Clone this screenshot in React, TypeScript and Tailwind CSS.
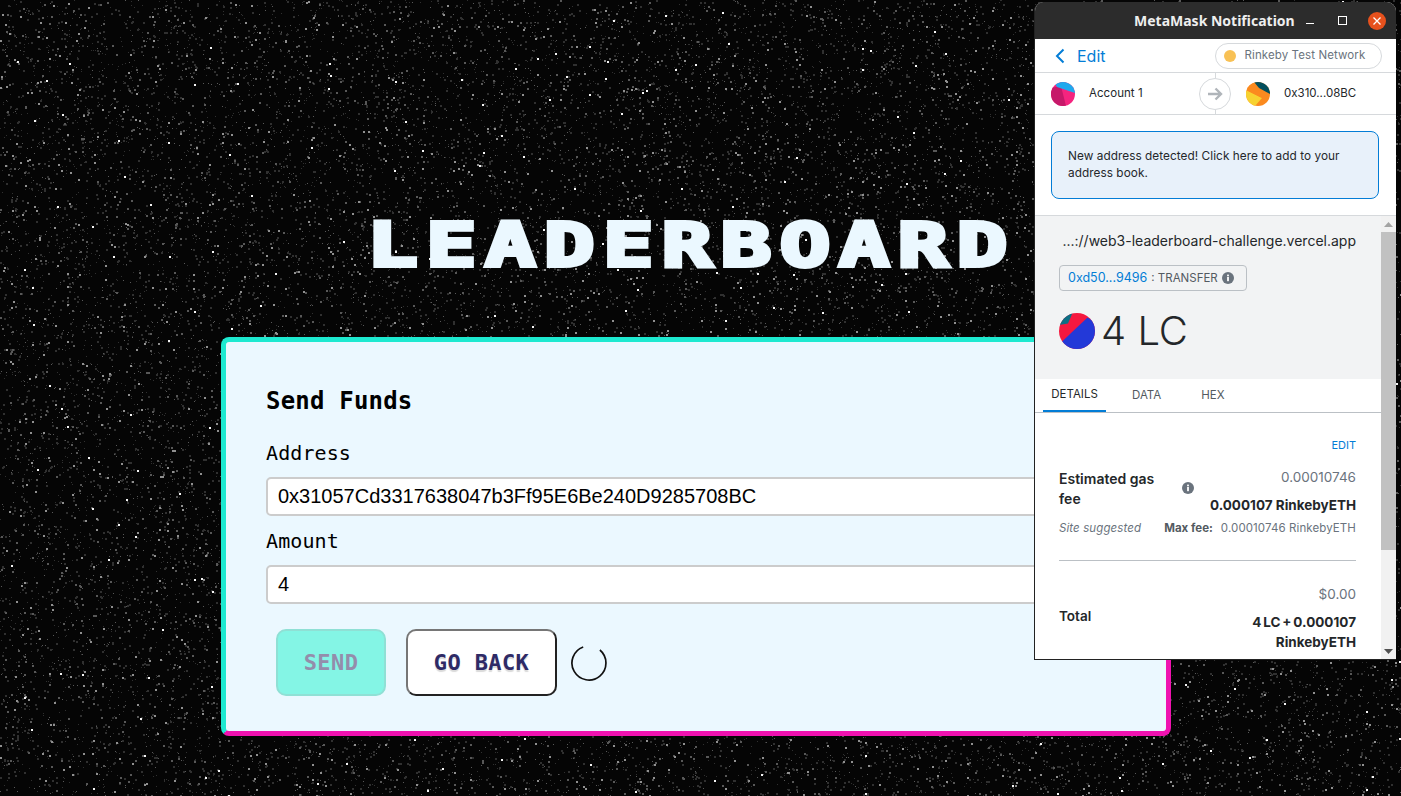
import React, { useMemo } from "react";

function Stars() {
  const paths = useMemo(() => {
    let s = 12345;
    const r = () => {
      s = (s * 1664525 + 1013904223) >>> 0;
      return s / 4294967296;
    };
    const buckets: string[][] = [[], [], [], []];
    for (let i = 0; i < 34000; i++) {
      const x = Math.floor(r() * 1401);
      const y = Math.floor(r() * 796);
      const k = r();
      const b = k < 0.68 ? 0 : k < 0.93 ? 1 : k < 0.99 ? 2 : 3;
      const sz = b >= 2 ? 2 : r() < 0.4 ? 2 : 1;
      buckets[b].push(`M${x} ${y}h${sz}v${sz}h-${sz}z`);
    }
    return buckets.map((b) => b.join(""));
  }, []);
  return (
    <svg className="absolute inset-0 blur-[0.5px]" width="1401" height="796" viewBox="0 0 1401 796" shapeRendering="crispEdges">
      <rect width="1401" height="796" fill="#050505" />
      <path d={paths[0]} fill="#303030" />
      <path d={paths[1]} fill="#585858" />
      <path d={paths[2]} fill="#909090" />
      <path d={paths[3]} fill="#f4f4f4" />
    </svg>
  );
}

function Info({ size = 12 }: { size?: number }) {
  return (
    <svg width={size} height={size} viewBox="0 0 12 12" className="shrink-0">
      <circle cx="6" cy="6" r="6" fill="#6a737d" />
      <rect x="5.1" y="5" width="1.8" height="4.2" fill="#fff" />
      <rect x="5.1" y="2.6" width="1.8" height="1.7" fill="#fff" />
    </svg>
  );
}

function Ident({ size, kind }: { size: number; kind: 0 | 1 | 2 }) {
  return (
    <svg width={size} height={size} viewBox="0 0 24 24" className="shrink-0">
      <defs>
        <clipPath id={`c${kind}`}>
          <circle cx="12" cy="12" r="12" />
        </clipPath>
      </defs>
      <g clipPath={`url(#c${kind})`}>
        {kind === 0 && (
          <>
            <rect width="24" height="24" fill="#f5247f" />
            <path d="M0 6L10 4L15 24H0Z" fill="#c6196a" />
            <path d="M3 0H24V11L6 5Z" fill="#1fa9ee" />
          </>
        )}
        {kind === 1 && (
          <>
            <rect width="24" height="24" fill="#fb8a1f" />
            <path d="M0 8L16 16L9 24H0Z" fill="#f7d231" />
            <path d="M0 0H8L16 16L0 8Z" fill="#fb8a1f" />
            <path d="M8 0H24V12L13 6Z" fill="#034f5d" />
          </>
        )}
        {kind === 2 && (
          <>
            <rect width="24" height="24" fill="#f5183f" />
            <path d="M1 20L19 3L24 6V24H6Z" fill="#2339d8" />
            <path d="M0 8L5 0H9L6 7Z" fill="#0b6f85" />
          </>
        )}
      </g>
    </svg>
  );
}

function MetaMask() {
  return (
    <div className="absolute left-[1034px] top-[2px] w-[362px] h-[658px] flex flex-col overflow-hidden rounded-t-[9px] border-l border-b border-[#222] bg-white text-[#24272a] font-['Inter','Noto_Sans',sans-serif]">
      <div className="h-[37px] shrink-0 bg-[#2c2c2c] flex items-center text-white">
        <span className="ml-[99px] w-[161px] text-[14px] font-bold whitespace-nowrap font-['Noto_Sans',sans-serif] text-[#eee]">MetaMask Notification</span>
        <span className="ml-[11px] w-[8px] h-[1px] bg-white mt-[5px]" />
        <span className="ml-[24px] w-[9px] h-[9px] border border-white" />
        <span className="ml-[21px] w-[18px] h-[18px] rounded-full bg-[#e6511d] flex items-center justify-center">
          <svg width="10" height="10" viewBox="0 0 10 10">
            <path d="M1.5 1.5L8.5 8.5M8.5 1.5L1.5 8.5" stroke="#fff" strokeWidth="1.3" />
          </svg>
        </span>
      </div>

      <div className="h-[34px] shrink-0 border-b border-[#d6d9dc] flex items-center">
        <svg width="10" height="16" viewBox="0 0 10 16" className="ml-[20px]">
          <path d="M8.5 1.5L2 8L8.5 14.5" fill="none" stroke="#037dd6" strokeWidth="2" />
        </svg>
        <span className="ml-[12px] text-[16px] text-[#037dd6]">Edit</span>
        <div className="ml-[109px] w-[167px] h-[26px] rounded-full border border-[#d6d9dc] flex items-center">
          <span className="ml-[8px] w-[12px] h-[12px] rounded-full bg-[#f8c155]" />
          <span className="ml-[9px] text-[11.5px] tracking-[0.1px] text-[#6a737d] whitespace-nowrap">Rinkeby Test Network</span>
        </div>
      </div>

      <div className="h-[42px] shrink-0 border-b border-[#d6d9dc] flex items-center relative">
        <div className="ml-[16px]"><Ident size={24} kind={0} /></div>
        <span className="ml-[14px] w-[110px] text-[11.5px] tracking-[0.05px]">Account 1</span>
        <div className="relative w-[32px] h-[32px] rounded-full border border-[#d6d9dc] bg-white flex items-center justify-center">
          <span className="absolute left-[15px] top-[-6px] h-[5px] w-px bg-[#d6d9dc]" />
          <span className="absolute left-[15px] bottom-[-6px] h-[5px] w-px bg-[#d6d9dc]" />
          <svg width="16" height="14" viewBox="0 0 16 14">
            <path d="M1 7H14M8.5 1.5L14 7L8.5 12.5" fill="none" stroke="#b0b5ba" strokeWidth="2.4" />
          </svg>
        </div>
        <div className="ml-[15px]"><Ident size={24} kind={1} /></div>
        <span className="ml-[14px] text-[11.5px] whitespace-nowrap">0x310...08BC</span>
      </div>

      <div className="h-[101px] shrink-0 border-b border-[#d6d9dc] pt-[16px] pl-[16px]">
        <div className="w-[328px] h-[68px] rounded-[8px] border border-[#037dd6] bg-[#e8f1fa] px-[16px] pt-[16px] text-[11.8px] tracking-[0.05px] leading-[17px]">
          New address detected! Click here to add to your address book.
        </div>
      </div>

      <div className="flex-1 min-h-0 flex">
        <div className="w-[346px] shrink-0 overflow-hidden flex flex-col">
          <div className="h-[163px] shrink-0 bg-[#f2f3f4] pl-[24px] pr-[25px]">
            <div className="mt-[15px] text-[14px] leading-[20px] text-right whitespace-nowrap">...://web3-leaderboard-challenge.vercel.app</div>
            <div className="mt-[14px] w-[188px] h-[26px] rounded-[4px] border border-[#bbc0c5] flex items-center pl-[8px]">
              <span className="text-[12.5px] text-[#037dd6] whitespace-nowrap">0xd50...9496</span>
              <span className="ml-[4px] text-[11.5px] leading-[14px] mb-[1px] text-[#535a61] whitespace-nowrap">: TRANSFER</span>
              <span className="ml-[4px]"><Info /></span>
            </div>
            <div className="mt-[22px] flex items-center">
              <Ident size={36} kind={2} />
              <span className="ml-[6px] text-[40px] leading-[36px] font-light whitespace-nowrap">4 LC</span>
            </div>
          </div>

          <div className="h-[34px] shrink-0 border-b border-[#bbc0c5] flex text-[11.5px] text-[#535a61]">
            <div className="ml-[8px] w-[63px] h-[33px] pt-[1px] border-b-2 border-[#037dd6] flex items-center justify-center text-[#24272a]">DETAILS</div>
            <div className="ml-[26px] h-[33px] pt-[1px] flex items-center">DATA</div>
            <div className="ml-[40px] h-[33px] pt-[1px] flex items-center">HEX</div>
          </div>

          <div className="pl-[24px] pr-[25px]">
            <div className="mt-[24px] text-[11px] leading-[16px] text-right text-[#037dd6]">EDIT</div>
            <div className="mt-[14px] flex">
              <div className="w-[100px] mt-[2px] text-[14px] leading-[20px] font-semibold">Estimated gas fee</div>
              <div className="ml-[23px] mt-[15px]"><Info /></div>
              <div className="flex-1 text-right">
                <div className="text-[13.5px] leading-[20px] text-[#6a737d]">0.00010746</div>
                <div className="mt-[8px] text-[13.5px] leading-[20px] font-bold whitespace-nowrap">0.000107 RinkebyETH</div>
              </div>
            </div>
            <div className="mt-[5px] flex items-center justify-between text-[11.5px] leading-[16px] text-[#6a737d]">
              <span className="italic tracking-[0.1px]">Site suggested</span>
              <span className="whitespace-nowrap"><b className="text-[#535a61] font-bold">Max fee:</b><span className="ml-[8px] tracking-[0.1px]">0.00010746 RinkebyETH</span></span>
            </div>
            <div className="mt-[24px] h-px bg-[#bbc0c5]" />
            <div className="mt-[23px] text-right text-[13.5px] leading-[20px] text-[#6a737d]">$0.00</div>
            <div className="flex justify-between">
              <span className="text-[13.5px] leading-[20px] font-semibold mt-[2px]">Total</span>
              <span className="mt-[8px] w-[130px] text-right text-[13.5px] leading-[20px] font-bold [word-spacing:-1.3px]">4 LC + 0.000107 RinkebyETH</span>
            </div>
          </div>
        </div>

        <div className="w-[15px] shrink-0 bg-[#f1f1f1] flex flex-col items-center">
          <svg width="9" height="5" viewBox="0 0 9 5" className="mt-[6px] shrink-0"><path d="M4.5 0L9 5H0Z" fill="#a3a3a3" /></svg>
          <div className="mt-[5px] w-full h-[318px] bg-[#c1c1c1] shrink-0" />
          <svg width="9" height="5" viewBox="0 0 9 5" className="mt-auto mb-[5px] shrink-0"><path d="M0 0H9L4.5 5Z" fill="#505050" /></svg>
        </div>
      </div>
    </div>
  );
}

export default function App() {
  return (
    <div className="relative w-[1401px] h-[796px] overflow-hidden bg-black">
      <Stars />
      <div className="relative flex flex-col">
        <h1 className="mt-[209px] ml-[367px] h-[72px] leading-[72px] origin-left scale-x-[1.4] text-[60px] font-bold whitespace-nowrap tracking-[6px] text-[#ebf8ff] font-['DejaVu_Sans_Mono',monospace] [-webkit-text-stroke:4px_#ebf8ff]">
          LEADERBOARD
        </h1>
        <div className="mt-[56px] ml-[221px] w-[950px] h-[399px] rounded-[8px] border-[5px] border-t-[#1de9d0] border-l-[#1de9d0] border-r-[#f012b0] border-b-[#f012b0] bg-[#ebf8ff] px-[40px] font-['DejaVu_Sans_Mono',monospace] text-black">
          <div className="mt-[43px] text-[24px] leading-[32px] font-bold whitespace-nowrap tracking-[0.2px]">Send Funds</div>
          <div className="mt-[22px] text-[20px] leading-[28px] tracking-[0.1px]">Address</div>
          <div className="mt-[10px] h-[39px] rounded-[5px] border-2 border-[#ccc] bg-white px-[10px] pb-[2px] flex items-center text-[20px] font-['Liberation_Sans',sans-serif]">
            0x31057Cd3317638047b3Ff95E6Be240D9285708BC
          </div>
          <div className="mt-[11px] text-[20px] leading-[28px] tracking-[0.1px]">Amount</div>
          <div className="mt-[10px] h-[39px] rounded-[5px] border-2 border-[#ccc] bg-white px-[10px] pb-[2px] flex items-center text-[20px] font-['Liberation_Sans',sans-serif]">
            4
          </div>
          <div className="mt-[25px] ml-[10px] flex items-center">
            <button className="w-[110px] h-[67px] rounded-[10px] border-2 border-[#8fe0d5] bg-[#84f5e5] text-[22px] font-bold text-[#948dab] tracking-[0.4px]">SEND</button>
            <button className="ml-[20px] w-[151px] h-[67px] rounded-[10px] border-2 border-t-[#767676] border-l-[#767676] border-r-[#222] border-b-[#222] bg-white text-[22px] font-bold text-[#2e2a66] tracking-[0.4px] [text-shadow:0_2px_1px_rgba(0,0,0,0.15)]">GO BACK</button>
            <svg width="36" height="36" viewBox="0 0 36 36" className="ml-[14px]">
              <path d="M28.9 5A17 17 0 1 1 12.2 2" fill="none" stroke="#111" strokeWidth="1.7" />
            </svg>
          </div>
        </div>
      </div>
      <MetaMask />
    </div>
  );
}
